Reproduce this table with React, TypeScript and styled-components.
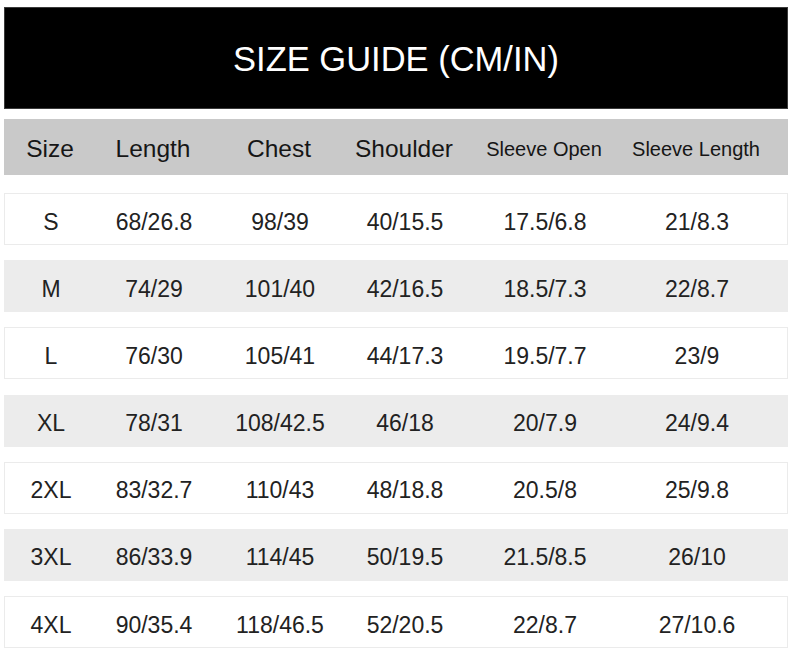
import React from 'react';
import styled, { createGlobalStyle } from 'styled-components';

const GlobalStyle = createGlobalStyle`
  html, body {
    margin: 0;
    padding: 0;
    background: #ffffff;
  }
  body {
    font-family: 'Liberation Sans', Arial, Helvetica, sans-serif;
    color: #1c1c1c;
  }
`;

const Page = styled.div`
  width: 784px;
  padding: 7px 0 0 4px;
  display: flex;
  flex-direction: column;
`;

const TitleBar = styled.div`
  height: 102px;
  box-sizing: border-box;
  background: #000;
  border: 1px solid #3a3a3a;
  display: flex;
  align-items: center;
  justify-content: center;
  padding-top: 2px;
  margin-bottom: 10px;
`;

const Title = styled.h1`
  margin: 0;
  color: #fff;
  font-weight: 400;
  font-size: 34.5px;
  letter-spacing: 0;
`;

const columns = '92px 114px 138px 112px 168px 136px 24px';

const HeadRow = styled.div`
  display: grid;
  grid-template-columns: ${columns};
  align-items: center;
  height: 56px;
  box-sizing: border-box;
  padding-top: 4px;
  background: #c9c9c9;
  margin-bottom: 18px;
`;

const HeadCell = styled.div<{ $small?: boolean }>`
  text-align: center;
  white-space: nowrap;
  font-size: ${(p) => (p.$small ? '20px' : '24.5px')};
  color: #161616;
`;

const Body = styled.div`
  display: flex;
  flex-direction: column;
  gap: 15.2px;
`;

const Row = styled.div<{ $shaded: boolean }>`
  display: grid;
  grid-template-columns: ${columns};
  align-items: center;
  height: 52px;
  box-sizing: border-box;
  padding-top: 6px;
  background: ${(p) => (p.$shaded ? '#ececec' : '#ffffff')};
  border: 1px solid ${(p) => (p.$shaded ? '#ececec' : '#ebebeb')};
`;

const Cell = styled.div`
  text-align: center;
  white-space: nowrap;
  font-size: 23px;
  color: #222;
`;

const headers = [
  { label: 'Size' },
  { label: 'Length' },
  { label: 'Chest' },
  { label: 'Shoulder' },
  { label: 'Sleeve Open', small: true },
  { label: 'Sleeve Length', small: true },
];

const rows = [
  ['S', '68/26.8', '98/39', '40/15.5', '17.5/6.8', '21/8.3'],
  ['M', '74/29', '101/40', '42/16.5', '18.5/7.3', '22/8.7'],
  ['L', '76/30', '105/41', '44/17.3', '19.5/7.7', '23/9'],
  ['XL', '78/31', '108/42.5', '46/18', '20/7.9', '24/9.4'],
  ['2XL', '83/32.7', '110/43', '48/18.8', '20.5/8', '25/9.8'],
  ['3XL', '86/33.9', '114/45', '50/19.5', '21.5/8.5', '26/10'],
  ['4XL', '90/35.4', '118/46.5', '52/20.5', '22/8.7', '27/10.6'],
];

const App: React.FC = () => {
  return (
    <>
      <GlobalStyle />
      <Page>
        <TitleBar>
          <Title>SIZE GUIDE (CM/IN)</Title>
        </TitleBar>
        <HeadRow>
          {headers.map((h) => (
            <HeadCell key={h.label} $small={h.small}>
              {h.label}
            </HeadCell>
          ))}
          <span />
        </HeadRow>
        <Body>
          {rows.map((r, i) => (
            <Row key={r[0]} $shaded={i % 2 === 1}>
              {r.map((v, j) => (
                <Cell key={j}>{v}</Cell>
              ))}
              <span />
            </Row>
          ))}
        </Body>
      </Page>
    </>
  );
};

export default App;
